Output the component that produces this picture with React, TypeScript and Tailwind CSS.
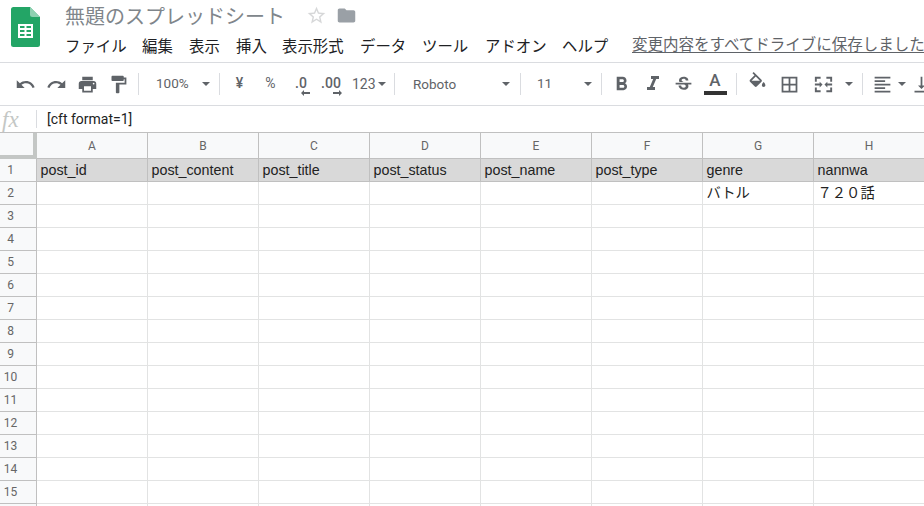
import React from "react";

const P = ({ d, className = "w-[21px] h-[21px]" }: { d: string; className?: string }) => (
  <svg viewBox="0 0 24 24" className={className} fill="#5f6368"><path d={d} /></svg>
);
const Caret = () => <svg viewBox="0 0 8 4" className="w-[8px] h-[4px] shrink-0" fill="#5f6368"><path d="M0 0h8L4 4z" /></svg>;
const Sep = ({ w = "w-[9px]" }: { w?: string }) => (
  <div className={`${w} h-[22px] flex justify-center shrink-0`}><div className="w-px h-full bg-[#dadce0]" /></div>
);
const Cell = ({ w, children, className = "justify-center" }: { w: string; children?: React.ReactNode; className?: string }) => (
  <div className={`${w} h-full shrink-0 flex items-center ${className}`}>{children}</div>
);

const icons = {
  undo: "M12.5 8c-2.65 0-5.05.99-6.9 2.6L2 7v9h9l-3.62-3.62c1.39-1.16 3.16-1.88 5.12-1.88 3.54 0 6.55 2.31 7.6 5.5l2.37-.78C21.08 11.03 17.15 8 12.5 8z",
  redo: "M18.4 10.6C16.55 8.99 14.15 8 11.5 8c-4.65 0-8.58 3.03-9.96 7.22L3.9 16c1.05-3.19 4.05-5.5 7.6-5.5 1.95 0 3.73.72 5.12 1.88L13 16h9V7l-3.6 3.6z",
  print: "M19 8H5c-1.66 0-3 1.34-3 3v6h4v4h12v-4h4v-6c0-1.66-1.34-3-3-3zm-3 11H8v-5h8v5zm3-7c-.55 0-1-.45-1-1s.45-1 1-1 1 .45 1 1-.45 1-1 1zm-1-9H6v4h12V3z",
  paint: "M18 4V3c0-.55-.45-1-1-1H5c-.55 0-1 .45-1 1v4c0 .55.45 1 1 1h12c.55 0 1-.45 1-1V6h1v4H9v11c0 .55.45 1 1 1h2c.55 0 1-.45 1-1v-9h8V4h-3z",
  bold: "M15.6 10.79c.97-.67 1.65-1.77 1.65-2.79 0-2.26-1.75-4-4-4H7v14h7.04c2.09 0 3.71-1.7 3.71-3.79 0-1.52-.86-2.82-2.15-3.42zM10 6.5h3c.83 0 1.5.67 1.5 1.5s-.67 1.5-1.5 1.5h-3v-3zm3.5 9H10v-3h3.5c.83 0 1.5.67 1.5 1.5s-.67 1.5-1.5 1.5z",
  italic: "M10 4v3h2.21l-3.42 8H6v3h8v-3h-2.21l3.42-8H18V4z",
  strike: "M6.85 7.08C6.85 4.37 9.45 3 12.24 3c1.64 0 3 .49 3.9 1.28.77.65 1.46 1.73 1.46 3.24h-3.01c0-.31-.05-.59-.15-.85-.29-.86-1.2-1.28-2.25-1.28-1.86 0-2.34 1.02-2.34 1.7 0 .48.25.88.74 1.21.38.25.77.48 1.41.7H7.39c-.21-.34-.54-.89-.54-1.92zM21 12v-2H3v2h9.62c1.15.45 1.96.75 1.96 1.97 0 1-.81 1.67-2.28 1.67-1.54 0-2.93-.54-2.93-2.51H6.4c0 .55.08 1.13.24 1.58.81 2.29 3.29 3.3 5.67 3.3 2.27 0 5.3-.89 5.3-4.05 0-.3-.01-1.16-.48-1.94H21V12z",
  fill: "M16.56 8.94L7.62 0 6.21 1.41l2.38 2.38-5.15 5.15c-.59.59-.59 1.54 0 2.12l5.5 5.5c.29.29.68.44 1.06.44s.77-.15 1.06-.44l5.5-5.500c.59-.58.59-1.53 0-2.12zM5.21 10L10 5.21 14.79 10H5.21zM19 11.5s-2 2.17-2 3.5c0 1.1.9 2 2 2s2-.9 2-2c0-1.33-2-3.5-2-3.5z",
  borders: "M3 3v18h18V3H3zm8 16H5v-6h6v6zm0-8H5V5h6v6zm8 8h-6v-6h6v6zm0-8h-6V5h6v6z",
  merge: "M3 4h6v2H5v3H3V4zm12 0h6v5h-2V6h-4V4zM3 15h2v3h4v2H3v-5zm16 0h2v5h-6v-2h4v-3zM3 11h5V9l3 3-3 3v-2H3v-2zm18 0v2h-5v2l-3-3 3-3v2h5z",
  align: "M3 3h18v2H3zM3 7h12v2H3zM3 11h18v2H3zM3 15h12v2H3zM3 19h18v2H3z",
  valign: "M16 13h-3V3h-2v10H8l4 4 4-4zM4 19v2h16v-2H4z",
  star: "M22 9.24l-7.19-.62L12 2 9.19 8.63 2 9.24l5.46 4.73L5.82 21 12 17.27 18.18 21l-1.63-7.03L22 9.24zM12 15.4l-3.76 2.27 1-4.28-3.32-2.88 4.38-.38L12 6.1l1.71 4.04 4.38.38-3.32 2.88 1 4.28L12 15.4z",
  folder: "M10 4H4c-1.1 0-1.99.9-1.99 2L2 18c0 1.1.9 2 2 2h16c1.1 0 2-.9 2-2V8c0-1.1-.9-2-2-2h-8l-2-2z",
};

const Logo = () => (
  <svg viewBox="0 0 29 40" className="w-[29px] h-[40px]">
    <path d="M2.5 0H19l10 10v27.500a2.500 2.500 0 0 1-2.500 2.500h-24A2.500 2.500 0 0 1 0 37.500v-35A2.500 2.500 0 0 1 2.500 0z" fill="#23a566" />
    <path d="M19 0l10 10h-7.500A2.500 2.500 0 0 1 19 7.500z" fill="#8ed1b1" />
    <path d="M7 17h15v14H7zm2 2v2h4.500v-2zm6.500 0v2H20v-2zM9 23v2h4.500v-2zm6.500 0v2H20v-2zM9 27v2h4.500v-2zm6.500 0v2H20v-2z" fill="#fff" fillRule="evenodd" />
  </svg>
);

const menus: [string, string][] = [
  ["ファイル", "w-[77px]"],
  ["編集", "w-[47px]"],
  ["表示", "w-[47px]"],
  ["挿入", "w-[46px]"],
  ["表示形式", "w-[78px]"],
  ["データ", "w-[62px]"],
  ["ツール", "w-[63px]"],
  ["アドオン", "w-[77px]"],
  ["ヘルプ", "w-[70px]"],
];

const cols = ["A", "B", "C", "D", "E", "F", "G", "H"];
const row1 = ["post_id", "post_content", "post_title", "post_status", "post_name", "post_type", "genre", "nannwa"];
const row2 = ["", "", "", "", "", "", "バトル", "７２０話"];
const rowNums = [3, 4, 5, 6, 7, 8, 9, 10, 11, 12, 13, 14, 15];

const RowHead = ({ n }: { n?: number }) => (
  <div className="h-[23px] bg-[#f8f9fa] border-r border-b border-r-[#c0c0c0] border-b-[#c0c0c0] pr-[15px] flex items-center justify-center font-['Roboto',sans-serif] text-[12px] text-[#666]">
    {n}
  </div>
);

const DataCell = ({ text, fill }: { text: string; fill?: boolean }) => (
  <div className={`h-[23px] border-r border-b pl-[3.5px] pt-[1px] flex items-center whitespace-nowrap overflow-hidden text-[14.3px] text-[#222] font-['Liberation_Sans','Noto_Sans_CJK_JP',sans-serif] ${fill ? "bg-[#d9d9d9] border-[#c0c0c0]" : "bg-white border-[#e2e3e3]"}`}>
    {text}
  </div>
);

export default function App() {
  return (
    <div className="w-[924px] h-[506px] overflow-hidden bg-white font-['Noto_Sans_CJK_JP',sans-serif]">
      {/* title + menu */}
      <div className="h-[63px] border-b border-[#dadce0] flex">
        <div className="w-[65px] shrink-0 pl-[11px] pt-[7px]"><Logo /></div>
        <div className="flex-1 min-w-0">
          <div className="h-[31px] flex items-center">
            <span className="text-[20px] leading-none text-[#80868b] w-[241px] whitespace-nowrap">無題のスプレッドシート</span>
            <P d={icons.star} className="w-[21px] h-[21px] opacity-25" />
            <div className="w-[9px]" />
            <svg viewBox="0 0 24 24" className="w-[21px] h-[21px]" fill="#9aa0a6"><path d={icons.folder} /></svg>
          </div>
          <div className="h-[31px] flex items-center whitespace-nowrap">
            {menus.map(([m, w]) => (
              <span key={m} className={`${w} shrink-0 text-[15.4px] leading-none text-[#202124] -mt-[1px]`}>{m}</span>
            ))}
            <span className="text-[15.5px] leading-none text-[#5f6368] underline underline-offset-2 -mt-[5px]">変更内容をすべてドライブに保存しました</span>
          </div>
        </div>
      </div>

      {/* toolbar */}
      <div className="h-[43px] border-b border-[#dadce0] flex items-center pl-[10px] overflow-hidden font-['Roboto',sans-serif] text-[#5f6368]">
        <Cell w="w-[31px]"><P d={icons.undo} /></Cell>
        <Cell w="w-[31px]"><P d={icons.redo} /></Cell>
        <Cell w="w-[31px]"><P d={icons.print} /></Cell>
        <Cell w="w-[31px]"><P d={icons.paint} /></Cell>
        <Sep />
        <Cell w="w-[72px]" className="justify-between pl-[13px] pr-[5px] text-[13.5px]"><span className="-mt-[2px]">100%</span><Caret /></Cell>
        <Sep />
        <Cell w="w-[31px]" className="justify-center text-[14px] font-medium"><span className="-mt-[2px]">¥</span></Cell>
        <Cell w="w-[31px]" className="justify-center text-[14px]"><span className="-mt-[2px]">%</span></Cell>
        <Cell w="w-[30px]" className="justify-center flex-col text-[14px] font-medium leading-none">
          <span className="mt-[3px]">.0</span>
          <svg viewBox="0 0 9 6" className="w-[9px] h-[6px] ml-[8px]" fill="#5f6368"><path d="M0 3l3-3v2h6v2H3v2z" /></svg>
        </Cell>
        <Cell w="w-[30px]" className="justify-center flex-col text-[14px] font-medium leading-none">
          <span className="mt-[3px]">.00</span>
          <svg viewBox="0 0 9 6" className="w-[9px] h-[6px] ml-[13px]" fill="#5f6368"><path d="M9 3L6 0v2H0v2h6v2z" /></svg>
        </Cell>
        <Cell w="w-[44px]" className="justify-start pl-[6px] gap-[2px] text-[14px]"><span>123</span><Caret /></Cell>
        <Sep />
        <Cell w="w-[117px]" className="justify-between pl-[14px] pr-[6px] text-[13.5px]"><span>Roboto</span><Caret /></Cell>
        <Sep />
        <Cell w="w-[72px]" className="justify-between pl-[12px] pr-[5px] text-[13.5px]"><span className="-mt-[2px]">11</span><Caret /></Cell>
        <Sep />
        <Cell w="w-[31px]"><P d={icons.bold} className="w-[23px] h-[23px]" /></Cell>
        <Cell w="w-[31px]"><P d={icons.italic} className="w-[24px] h-[24px]" /></Cell>
        <Cell w="w-[31px]"><P d={icons.strike} /></Cell>
        <Cell w="w-[32px]" className="justify-center flex-col">
          <span className="text-[17px] font-medium leading-[18px] -mt-[2px]">A</span>
          <div className="w-[23px] h-[4px] bg-[#333] mt-[2px]" />
        </Cell>
        <Sep w="w-[10px]" />
        <Cell w="w-[32px]"><P d={icons.fill} className="w-[21px] h-[21px] -mt-[3px]" /></Cell>
        <Cell w="w-[33px]"><P d={icons.borders} /></Cell>
        <Cell w="w-[35px]"><P d={icons.merge} className="w-[23px] h-[23px]" /></Cell>
        <Cell w="w-[16px]"><Caret /></Cell>
        <Sep w="w-[10px]" />
        <Cell w="w-[30px]"><P d={icons.align} /></Cell>
        <Cell w="w-[10px]"><Caret /></Cell>
        <Cell w="w-[28px]"><P d={icons.valign} /></Cell>
      </div>

      {/* formula bar */}
      <div className="h-[26px] flex items-center">
        <div className="w-[36px] shrink-0 pl-[2px] font-['Liberation_Serif',serif] italic text-[23px] leading-none text-[#c4c7c5]">fx</div>
        <div className="w-px h-[18px] bg-[#dadce0]" />
        <div className="pl-[10px] font-['Roboto',sans-serif] text-[14px] text-[#222]">[cft format=1]</div>
      </div>

      {/* sheet */}
      <div className="border-t border-[#c0c0c0] grid grid-cols-[37px_repeat(8,111px)]">
        <div className="h-[26px] bg-[#f8f9fa] border-r-[4px] border-b-[4px] border-[#c4c7c5]" />
        {cols.map((c) => (
          <div key={c} className="h-[26px] bg-[#f8f9fa] border-r border-b border-[#c0c0c0] flex items-center justify-center font-['Roboto',sans-serif] text-[12px] text-[#666]">{c}</div>
        ))}
        <RowHead n={1} />
        {row1.map((t) => <DataCell key={t} text={t} fill />)}
        <RowHead n={2} />
        {row2.map((t, i) => <DataCell key={i} text={t} />)}
        {rowNums.map((n) => (
          <React.Fragment key={n}>
            <RowHead n={n} />
            {cols.map((c) => <DataCell key={c} text="" />)}
          </React.Fragment>
        ))}
        <RowHead />
        {cols.map((c) => <DataCell key={c} text="" />)}
      </div>
    </div>
  );
}
